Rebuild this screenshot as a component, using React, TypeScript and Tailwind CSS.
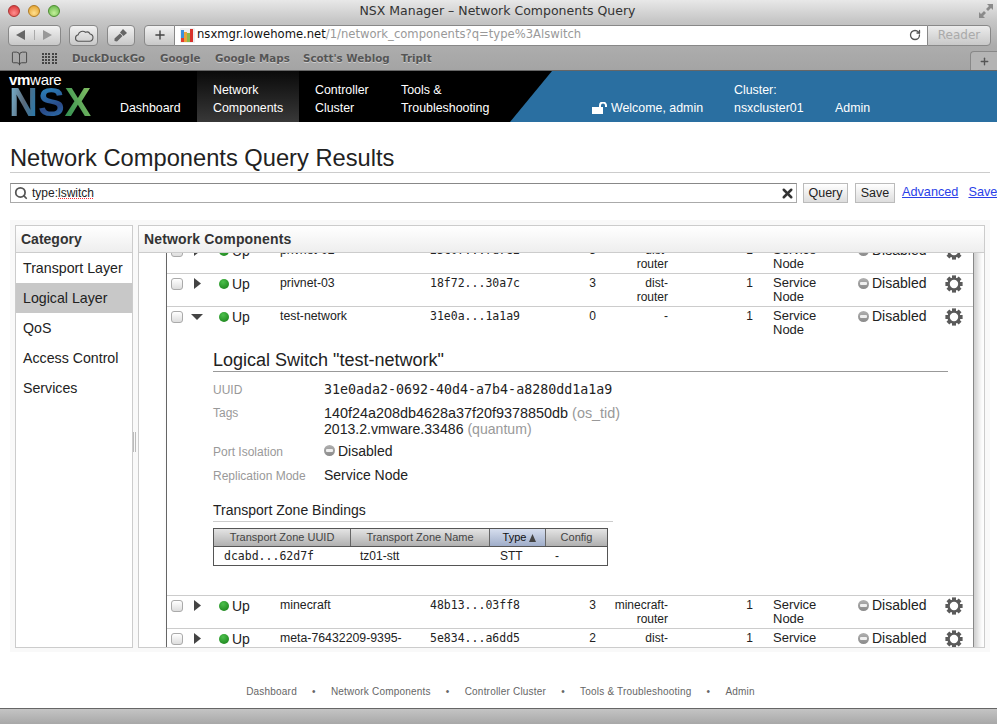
import { BookOpen, Plus, RotateCw, Search, X } from "lucide-react";

const sans = "font-['Liberation_Sans',Arial,sans-serif]";
const mono = "font-['DejaVu_Sans_Mono',monospace]";

const bookmarks = [
	{ label: "DuckDuckGo", cls: "w-[88px]" },
	{ label: "Google", cls: "w-[55px]" },
	{ label: "Google Maps", cls: "w-[88px]" },
	{ label: "Scott's Weblog", cls: "w-[98px]" },
	{ label: "TripIt", cls: "w-[50px]" },
];

const categories = ["Transport Layer", "Logical Layer", "QoS", "Access Control", "Services"];

const footerLinks = ["Dashboard", "Network Components", "Controller Cluster", "Tools & Troubleshooting", "Admin"];

const Gear = () => (
	<svg width="18" height="18" viewBox="0 0 18 18">
		{[0, 45, 90, 135, 180, 225, 270, 315].map((a) => (
			<rect key={a} x="7" y="0.4" width="4" height="4" fill="#5a5a5a" transform={`rotate(${a} 9 9)`} />
		))}
		<circle cx="9" cy="9" r="5.4" fill="#fff" stroke="#5a5a5a" strokeWidth="2.4" />
	</svg>
);

const DisabledIcon = () => (
	<span className="flex h-[11px] w-[11px] shrink-0 items-center justify-center rounded-full bg-[linear-gradient(#b0b0b0,#8a8a8a)]">
		<span className="h-[3px] w-[7px] rounded-[1px] bg-[#f0f0f0]" />
	</span>
);

const Arrow = ({ open }: { open: boolean }) =>
	open ? (
		<svg width="12" height="6" viewBox="0 0 12 6">
			<path d="M0 0 L12 0 L6 6 Z" fill="#444" />
		</svg>
	) : (
		<svg width="7" height="11" viewBox="0 0 7 11">
			<path d="M0 0 L7 5.5 L0 11 Z" fill="#444" />
		</svg>
	);

type RowProps = {
	name: string;
	uuid: string;
	count: string;
	router: string[];
	open?: boolean;
};

const RowLine = ({ name, uuid, count, router, open = false }: RowProps) => (
	<div className="grid h-[32px] grid-cols-[20px_26px_67px_150px_145px_35px_58px_85px_105px_87px_28px] pt-[2px] text-[12.3px] leading-[14px] text-[#222]">
		<div className="pl-[4px] pt-[2px]">
			<div className="h-[12px] w-[12px] rounded-[3px] border border-[#aaa] bg-[linear-gradient(#fff,#ddd)]" />
		</div>
		<div className={`flex justify-center pr-[6px] ${open ? "pt-[5px]" : "pt-[2px]"}`}>
			<Arrow open={open} />
		</div>
		<div className="flex items-start gap-[3px] pl-[6px] text-[14px] leading-[16px]">
			<span className="mt-[3px] h-[10px] w-[10px] rounded-full bg-[radial-gradient(circle_at_40%_30%,#4cc04c,#157a15)]" />
			<span className="-translate-y-[0.5px]">Up</span>
		</div>
		<div>{name}</div>
		<div className={`${mono} text-[11.5px]`}>{uuid}</div>
		<div className="text-center text-[12px]">{count}</div>
		<div className="text-right text-[12px]">
			{router.map((r) => (
				<div key={r}>{r}</div>
			))}
		</div>
		<div className="text-right text-[12px]">1</div>
		<div className="pl-[20px] text-[13px] leading-[13.5px]">
			Service
			<br />
			Node
		</div>
		<div className="-mt-[1px] flex items-start gap-[3px] text-[14px] leading-[16px]">
			<span className="mt-[3px]">
				<DisabledIcon />
			</span>
			Disabled
		</div>
		<div className="-mt-[1px]">
			<Gear />
		</div>
	</div>
);

const Detail = () => (
	<div className="pl-[46px] text-[#222]">
		<h3 className="mt-[10px] w-[735px] border-b border-[#999] text-[18px] leading-[22px]">
			Logical Switch "test-network"
		</h3>
		<div className="mt-[9px] flex leading-[18px]">
			<div className="w-[111px] text-[12px] text-[#999]">UUID</div>
			<div className={`${mono} text-[13.3px]`}>31e0ada2-0692-40d4-a7b4-a8280dd1a1a9</div>
		</div>
		<div className="mt-[6px] flex text-[14px] leading-[16px]">
			<div className="w-[111px] text-[12px] text-[#999]">Tags</div>
			<div>
				<div className="text-[14.4px]">
					140f24a208db4628a37f20f9378850db <span className="text-[#999]">(os_tid)</span>
				</div>
				<div className="text-[14.1px]">
					2013.2.vmware.33486 <span className="text-[#999]">(quantum)</span>
				</div>
			</div>
		</div>
		<div className="mt-[6px] flex text-[14px] leading-[16px]">
			<div className="w-[111px] pt-[1px] text-[12px] text-[#999]">Port Isolation</div>
			<div className="flex items-center gap-[3px] -translate-y-[1px]">
				<DisabledIcon />
				Disabled
			</div>
		</div>
		<div className="mt-[7px] flex text-[14px] leading-[16px]">
			<div className="w-[111px] pt-[1px] text-[12px] text-[#999]">Replication Mode</div>
			<div>Service Node</div>
		</div>
		<h4 className="mt-[17px] w-[400px] border-b border-[#ccc] pb-[2px] text-[14px] leading-[18px]">
			Transport Zone Bindings
		</h4>
		<div className="mt-[6px] w-[395px] border border-[#555] text-[11px]">
			<div className="grid h-[18px] grid-cols-[137px_139px_56px_61px] border-b border-[#555] bg-[linear-gradient(#e4e4e4,#b0b0b0)] leading-[17px] text-[#444]">
				<div className="border-r border-[#666] text-center">Transport Zone UUID</div>
				<div className="border-r border-[#666] text-center">Transport Zone Name</div>
				<div className="flex items-center justify-center gap-[3px] border-r border-[#666] bg-[linear-gradient(#d6deee,#9fadc9)] pl-[4px] text-[#111]">
					Type
					<svg width="7" height="8" viewBox="0 0 7 8">
						<path d="M3.5 0 L7 8 L0 8 Z" fill="#444" />
					</svg>
				</div>
				<div className="text-center">Config</div>
			</div>
			<div className="grid h-[18px] grid-cols-[137px_139px_56px_61px] bg-white text-[12px] leading-[18px]">
				<div className={`${mono} pl-[10px] text-[11.5px]`}>dcabd...62d7f</div>
				<div className="pl-[9px]">tz01-stt</div>
				<div className="pl-[10px]">STT</div>
				<div className="pl-[9px]">-</div>
			</div>
		</div>
	</div>
);

const App = () => {
	return (
		<div className={`${sans} h-[724px] w-[997px] overflow-hidden bg-white`}>
			{/* window chrome */}
			<div className="h-[71px] border-b border-[#666] bg-[linear-gradient(#e8e8e8,#c6c6c6_30%,#adadad_65%,#a4a4a4)] font-['DejaVu_Sans',sans-serif]">
				<div className="relative flex h-[22px] items-center justify-center text-[12.5px] text-[#333]">
					<div className="absolute left-[8px] top-[5px] flex gap-[8px]">
						<span className="h-[12px] w-[12px] rounded-full border border-[#a33] bg-[radial-gradient(circle_at_50%_70%,#ff8f8f,#d42c2c)]" />
						<span className="h-[12px] w-[12px] rounded-full border border-[#b07a20] bg-[radial-gradient(circle_at_50%_70%,#ffdf8f,#e09a20)]" />
						<span className="h-[12px] w-[12px] rounded-full border border-[#4c8c30] bg-[radial-gradient(circle_at_50%_70%,#c4f09a,#5cb040)]" />
					</div>
					<span className="translate-x-[-1px]">NSX Manager – Network Components Query</span>
					<svg className="absolute right-[4px] top-[4px]" width="14" height="14" viewBox="0 0 14 14">
						<path d="M14 0 L8 0 L10 2 L7 5 L9 7 L12 4 L14 6 Z M0 14 L6 14 L4 12 L7 9 L5 7 L2 10 L0 8 Z" fill="#8a8a8a" />
					</svg>
				</div>
				<div className="flex h-[25px] items-center pl-[8px] pt-[1px]">
					<div className="flex h-[21px] w-[53px] items-center rounded-[4px] border border-[#888] bg-[linear-gradient(#f2f2f2,#c8c8c8)]">
						<div className="flex w-[26px] justify-center border-r border-[#aaa]">
							<svg width="10" height="10" viewBox="0 0 10 10">
								<path d="M9 0 L9 10 L0 5 Z" fill="#666" />
							</svg>
						</div>
						<div className="flex w-[26px] justify-center">
							<svg width="10" height="10" viewBox="0 0 10 10">
								<path d="M1 0 L1 10 L10 5 Z" fill="#999" />
							</svg>
						</div>
					</div>
					<div className="ml-[8px] flex h-[21px] w-[29px] items-center justify-center rounded-[4px] border border-[#888] bg-[linear-gradient(#f2f2f2,#c8c8c8)]">
						<svg width="20" height="13" viewBox="0 0 20 13">
							<path
								d="M4.5 12.3 H15.5 a3.7 3.7 0 0 0 .6 -7.3 a3.6 3.6 0 0 0 -4.6 -1.7 a4.6 4.6 0 0 0 -7.3 2.4 a3.4 3.4 0 0 0 -.2 6.6 Z"
								fill="none"
								stroke="#555"
								strokeWidth="1.1"
							/>
						</svg>
					</div>
					<div className="ml-[9px] flex h-[21px] w-[28px] items-center justify-center rounded-[4px] border border-[#888] bg-[linear-gradient(#f2f2f2,#c8c8c8)]">
						<svg width="14" height="14" viewBox="0 0 14 14">
							<path d="M0.5 13 L0.5 10.5 L6 5.5 L8.5 8 L3 13.5 Z M6 4.5 L9 1 L13 5 L9.5 8 Z" fill="#666" />
						</svg>
					</div>
					<div className="ml-[9px] flex h-[21px] w-[31px] items-center justify-center rounded-l-[4px] border border-[#888] bg-[linear-gradient(#f2f2f2,#c8c8c8)]">
						<Plus size={14} strokeWidth={2.4} color="#444" />
					</div>
					<div className="flex h-[21px] w-[752px] items-center border-y border-[#888] bg-white pl-[5px] text-[11.6px]">
						<svg width="15" height="15" viewBox="0 0 15 15" className="mr-[2px] shrink-0">
							<rect width="15" height="15" rx="1" fill="#eee" />
							<rect x="1" y="10" width="3" height="4" fill="#e23b2e" />
							<rect x="1" y="2" width="3" height="8" fill="#3b8fdc" />
							<rect x="4" y="4" width="3" height="10" fill="#e8a23a" />
							<rect x="7" y="5" width="3" height="9" fill="#8cb84a" />
							<rect x="10" y="1" width="3" height="13" fill="#d8322a" />
						</svg>
						<span className="text-[#111]">nsxmgr.lowehome.net</span>
						<span className="text-[#999]">/1/network_components?q=type%3Alswitch</span>
						<RotateCw size={12} strokeWidth={2.6} color="#555" className="ml-auto mr-[6px]" />
					</div>
					<div className="flex h-[21px] w-[64px] items-center justify-center rounded-r-[4px] border border-[#888] bg-[linear-gradient(#ececec,#c8c8c8)] text-[12px] text-[#aaa]">
						Reader
					</div>
				</div>
				<div className="flex h-[23px] items-center pl-[11px] text-[10.3px] font-bold text-[#555] [text-shadow:0_1px_0_#ccc]">
					<BookOpen size={17} strokeWidth={1.3} color="#444" />
					<div className="ml-[14px] grid w-[15px] grid-cols-5 gap-[1px]">
						{Array.from({ length: 20 }).map((_, i) => (
							<span key={i} className="h-[2px] w-[2px] bg-[#444]" />
						))}
					</div>
					<div className="ml-[15px] flex">
						{bookmarks.map((b) => (
							<span key={b.label} className={b.cls}>
								{b.label}
							</span>
						))}
					</div>
					<div className="ml-auto flex h-[19px] w-[27px] items-center justify-center self-end rounded-tl-[4px] border-l border-t border-[#888] bg-[#b4b4b4]">
						<Plus size={11} strokeWidth={3} color="#555" />
					</div>
				</div>
			</div>

			{/* nsx nav bar */}
			<div className="flex h-[51px] bg-[#2a6fa1] text-[12.4px] leading-[18px] text-white">
				<div className="flex w-[552px] shrink-0 bg-black [clip-path:polygon(0_0,100%_0,510px_100%,0_100%)]">
					<div className="w-[104px] pl-[9px] pt-[3px]">
						<div className="text-[15px] leading-[12px] tracking-[-0.3px]">
							<span className="font-bold">vm</span>ware
						</div>
						<div className="text-[40px] font-bold leading-[32px]">
							<span className="bg-[linear-gradient(100deg,#7cc0e0,#5b6b7b_50%,#1b7cb8)] bg-clip-text text-transparent">N</span>
							<span className="bg-[linear-gradient(160deg,#2a9ad0,#2a4a88_60%,#2c86c0)] bg-clip-text text-transparent">S</span>
							<span className="bg-[linear-gradient(70deg,#2a8a50,#8cc464)] bg-clip-text text-transparent">X</span>
						</div>
					</div>
					<div className="flex w-[93px] items-end px-4 pb-[5px]">Dashboard</div>
					<div className="flex w-[102px] items-end bg-[linear-gradient(#0a0a0a,#383838)] px-4 pb-[5px]">
						<div>
							Network
							<br />
							Components
						</div>
					</div>
					<div className="flex w-[102px] items-end px-4 pb-[5px]">
						<div>
							Controller
							<br />
							Cluster
						</div>
					</div>
					<div className="flex items-end pb-[5px]">
						<div>
							Tools &amp;
							<br />
							Troubleshooting
						</div>
					</div>
				</div>
				<div className="flex items-end whitespace-nowrap pb-[5px] pl-[40px]">
					<svg width="16" height="12" viewBox="0 0 16 12" className="mb-[3px] mr-[3px]">
						<rect x="0" y="5" width="11" height="7" fill="#fff" />
						<path d="M8 5 V3.5 a3 3 0 0 1 6 0 V5" fill="none" stroke="#fff" strokeWidth="2" />
					</svg>
					<div className="w-[91px]">Welcome, admin</div>
					<div className="ml-[32px] w-[68px]">
						Cluster:
						<br />
						nsxcluster01
					</div>
					<div className="ml-[33px]">Admin</div>
				</div>
			</div>

			{/* page title and search */}
			<h1 className="ml-[10px] mt-[22px] w-[980px] border-b border-[#ccc] text-[23.7px] leading-[28px] text-[#222]">
				Network Components Query Results
			</h1>
			<div className="ml-[10px] mt-[10px] flex h-[20px] w-[1200px] items-center whitespace-nowrap text-[12.7px]">
				<div className="flex h-[20px] w-[787px] shrink-0 items-center border border-[#aaa] border-t-[#888] bg-white pl-[3px] pr-[1px]">
					<Search size={14} strokeWidth={3} color="#555" />
					<span className="ml-[4px] text-[12px] text-[#222]">
						type:<span className="underline decoration-red-500 decoration-dotted">lswitch</span>
					</span>
					<X size={15} strokeWidth={4} color="#333" className="ml-auto" />
				</div>
				<button className="ml-[6px] h-[20px] w-[45px] shrink-0 border border-[#bbb] bg-[linear-gradient(#fff,#ddd)] text-[12.5px] text-[#222]">Query</button>
				<button className="ml-[7px] h-[20px] w-[40px] shrink-0 border border-[#bbb] bg-[linear-gradient(#fff,#ddd)] text-[12.5px] text-[#222]">Save</button>
				<a className="ml-[7px] text-[#2a3fe8] underline">Advanced</a>
				<a className="ml-[10px] text-[#2a3fe8] underline">Saved Queries</a>
			</div>

			{/* main panel */}
			<div className="ml-[10px] mt-[17px] flex h-[432px] w-[980px] gap-[5px] bg-[#f9f9f9] p-[5px] pb-[4px]">
				<div className="relative w-[118px] shrink-0 border border-[#ccc] bg-white">
					<div className="h-[27px] border-b border-[#ccc] bg-[linear-gradient(#fff,#eee)] pl-[5px] text-[14px] font-bold leading-[26px] text-[#333]">
						Category
					</div>
					{categories.map((c) => (
						<div
							key={c}
							className={`h-[30px] pl-[7px] text-[14.2px] leading-[30px] text-[#222] ${c === "Logical Layer" ? "bg-[#c8c8c8]" : ""}`}
						>
							{c}
						</div>
					))}
					{/* splitter grip */}
					<div className="absolute -right-[4px] top-[206px] flex h-[20px] gap-[1px]">
						<span className="w-px bg-[#bbb]" />
						<span className="w-px bg-[#bbb]" />
					</div>
				</div>
				<div className="min-w-0 flex-1 overflow-hidden border border-[#ccc] bg-white">
					<div className="h-[27px] border-b border-[#ccc] bg-[linear-gradient(#fff,#eee)] pl-[5px] text-[14px] font-bold leading-[26px] tracking-[0.15px] text-[#333]">
						Network Components
					</div>
					<div className="h-[394px] overflow-hidden">
						<div className="-mt-[13px] ml-[27px] w-[808px] border-x border-[#666] border-r-[#888] shadow-[4px_0_6px_#ccc]">
							<div className="h-[33px] border-t border-[#ccc]">
								<RowLine name="privnet-02" uuid="23c07...7d782" count="3" router={["dist-", "router"]} />
							</div>
							<div className="h-[33px] border-t border-[#ccc]">
								<RowLine name="privnet-03" uuid="18f72...30a7c" count="3" router={["dist-", "router"]} />
							</div>
							<div className="h-[289px] border-t border-[#ccc]">
								<RowLine name="test-network" uuid="31e0a...1a1a9" count="0" router={["-"]} open />
								<Detail />
							</div>
							<div className="h-[33px] border-t border-[#ccc]">
								<RowLine name="minecraft" uuid="48b13...03ff8" count="3" router={["minecraft-", "router"]} />
							</div>
							<div className="h-[33px] border-t border-[#ccc]">
								<RowLine name="meta-76432209-9395-" uuid="5e834...a6dd5" count="2" router={["dist-", "router"]} />
							</div>
						</div>
					</div>
				</div>
			</div>

			{/* footer links */}
			<div className="flex h-[56px] items-start justify-center pl-[4px] pt-[34px] text-[10px] leading-[12px] tracking-[0.2px] text-[#666]">
				{footerLinks.map((l, i) => (
					<span key={l} className="flex">
						{i > 0 && <span className="w-[34px] text-center">•</span>}
						{l}
					</span>
				))}
			</div>
			<div className="h-[16px] border-t border-[#666] bg-[linear-gradient(#c4c4c4,#a8a8a8)]" />
		</div>
	);
};

export default App;
